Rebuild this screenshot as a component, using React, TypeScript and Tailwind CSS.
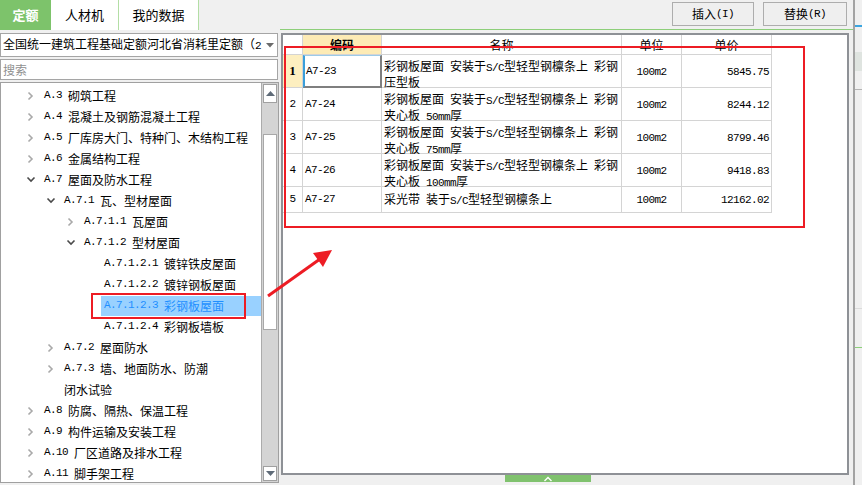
import React from 'react'

type Node = { lv: number; ch?: 'r' | 'd'; t: string; sel?: boolean }

const tree: Node[] = [
  { lv: 0, ch: 'r', t: 'A.3 砌筑工程' },
  { lv: 0, ch: 'r', t: 'A.4 混凝土及钢筋混凝土工程' },
  { lv: 0, ch: 'r', t: 'A.5 厂库房大门、特种门、木结构工程' },
  { lv: 0, ch: 'r', t: 'A.6 金属结构工程' },
  { lv: 0, ch: 'd', t: 'A.7 屋面及防水工程' },
  { lv: 1, ch: 'd', t: 'A.7.1 瓦、型材屋面' },
  { lv: 2, ch: 'r', t: 'A.7.1.1 瓦屋面' },
  { lv: 2, ch: 'd', t: 'A.7.1.2 型材屋面' },
  { lv: 3, t: 'A.7.1.2.1 镀锌铁皮屋面' },
  { lv: 3, t: 'A.7.1.2.2 镀锌钢板屋面' },
  { lv: 3, t: 'A.7.1.2.3 彩钢板屋面', sel: true },
  { lv: 3, t: 'A.7.1.2.4 彩钢板墙板' },
  { lv: 1, ch: 'r', t: 'A.7.2 屋面防水' },
  { lv: 1, ch: 'r', t: 'A.7.3 墙、地面防水、防潮' },
  { lv: 1, t: '闭水试验' },
  { lv: 0, ch: 'r', t: 'A.8 防腐、隔热、保温工程' },
  { lv: 0, ch: 'r', t: 'A.9 构件运输及安装工程' },
  { lv: 0, ch: 'r', t: 'A.10 厂区道路及排水工程' },
  { lv: 0, ch: 'r', t: 'A.11 脚手架工程' },
]

const rows = [
  { n: '1', code: 'A7-23', name: ['彩钢板屋面 安装于S/C型轻型钢檩条上 彩钢', '压型板'], unit: '100m2', price: '5845.75' },
  { n: '2', code: 'A7-24', name: ['彩钢板屋面 安装于S/C型轻型钢檩条上 彩钢', '夹心板 50mm厚'], unit: '100m2', price: '8244.12' },
  { n: '3', code: 'A7-25', name: ['彩钢板屋面 安装于S/C型轻型钢檩条上 彩钢', '夹心板 75mm厚'], unit: '100m2', price: '8799.46' },
  { n: '4', code: 'A7-26', name: ['彩钢板屋面 安装于S/C型轻型钢檩条上 彩钢', '夹心板 100mm厚'], unit: '100m2', price: '9418.83' },
  { n: '5', code: 'A7-27', name: ['采光带 装于S/C型轻型钢檩条上'], unit: '100m2', price: '12162.02' },
]

// ascii runs get the narrow mono font, like the SimSun half-width glyphs
function Txt({ s }: { s: string }) {
  const parts = s.split(/([ -~]+)/)
  return (
    <>
      {parts.map((p, i) =>
        !p ? null : /^[ -~]+$/.test(p) ? (
          <span key={i} className="font-['Liberation_Mono',monospace] text-[11px] tracking-[-0.6px] whitespace-pre">
            {p}
          </span>
        ) : (
          <span key={i}>{p}</span>
        )
      )}
    </>
  )
}

function Chevron({ kind }: { kind?: 'r' | 'd' }) {
  if (kind === 'r')
    return (
      <svg width="7" height="10" viewBox="0 0 7 10">
        <path d="M1.5 1.5 L5 5 L1.5 8.5" stroke="#a9a9a9" strokeWidth="1.6" fill="none" />
      </svg>
    )
  if (kind === 'd')
    return (
      <svg width="10" height="7" viewBox="0 0 10 7">
        <path d="M1.5 1.5 L5 5 L8.5 1.5" stroke="#4a4a4a" strokeWidth="1.6" fill="none" />
      </svg>
    )
  return null
}

export default function App() {
  return (
    <div className="relative w-[862px] h-[485px] overflow-hidden bg-[#f0f0f0] flex font-['Noto_Sans_CJK_SC',sans-serif] text-[12px] text-black">
      {/* left column */}
      <div className="w-[280px] flex flex-col">
        <div className="h-[30px] flex text-[13px]">
          <div className="w-[51px] bg-[#7dc36b] text-white font-bold flex items-center justify-center">定额</div>
          <div className="w-[68px] bg-white border-r border-[#b3dea5] flex items-center justify-center">人材机</div>
          <div className="w-[80px] bg-white border-r border-[#b3dea5] flex items-center justify-center">我的数据</div>
        </div>

        <div className="mt-[3px] w-[278px] h-[24px] bg-white border border-[#a5a5a5] flex items-center pl-[2px] pr-[3px]">
          <div className="flex-1 whitespace-nowrap overflow-hidden">
            <Txt s="全国统一建筑工程基础定额河北省消耗里定额（2" />
          </div>
          <svg width="8" height="5" viewBox="0 0 8 5" className="ml-[2px]">
            <path d="M0 0 L8 0 L4 4.5 Z" fill="#6b6b6b" />
          </svg>
        </div>

        <div className="mt-[2px] w-[278px] h-[21px] bg-white border border-[#a5a5a5] flex items-center pl-[2px] text-[#8f8f8f]">
          搜索
        </div>

        <div className="mt-[2px] w-[279px] h-[401px] bg-white border border-[#a0a0a0] flex overflow-hidden">
          <div className="flex-1 pt-[2px]">
            {tree.map((n, i) => (
              <div
                key={i}
                className="h-[21px] flex items-center whitespace-nowrap"
                style={{ paddingLeft: 23 + n.lv * 20 }}
              >
                <div className="w-[13px] flex items-center justify-center">
                  <Chevron kind={n.ch} />
                </div>
                <div
                  className={
                    n.sel
                      ? 'ml-[4px] pl-[3px] flex-1 h-[20px] flex items-center bg-[#99d1ff] text-[#1f8fff]'
                      : 'ml-[4px] pl-[3px] flex-1 h-[20px] flex items-center'
                  }
                >
                  <Txt s={n.t} />
                </div>
              </div>
            ))}
          </div>
          {/* scrollbar */}
          <div className="w-[17px] bg-[#d4d4d4] border-l border-[#ababab] flex flex-col p-px">
            <div className="h-[19px] bg-white border border-[#a0a0a0] flex items-center justify-center">
              <svg width="9" height="5" viewBox="0 0 9 5">
                <path d="M0 5 L9 5 L4.5 0 Z" fill="#5f6b78" />
              </svg>
            </div>
            <div className="h-[31px]" />
            <div className="h-[196px] bg-white border border-[#a8a8a8]" />
            <div className="flex-1" />
            <div className="h-[15px] bg-white border border-[#a0a0a0] flex items-center justify-center">
              <svg width="9" height="5" viewBox="0 0 9 5">
                <path d="M0 0 L9 0 L4.5 5 Z" fill="#5f6b78" />
              </svg>
            </div>
          </div>
        </div>
      </div>

      {/* right column */}
      <div className="w-[573px] flex flex-col">
        <div className="h-[29px] flex justify-end items-start pt-[2px] pr-[6px] gap-[9px]">
          <div className="w-[82px] h-[24px] bg-[#efefef] border border-[#adadad] flex items-center justify-center">
            <Txt s="插入(I)" />
          </div>
          <div className="w-[84px] h-[24px] bg-[#efefef] border border-[#adadad] flex items-center justify-center">
            <Txt s="替换(R)" />
          </div>
        </div>
        <div className="h-px bg-[#8dcf7a]" />

        <div className="mt-[3px] ml-px w-[568px] h-[442px] bg-white border-2 border-[#8e9196]">
          {/* header */}
          <div className="flex h-[20px]">
            <div className="w-[20px] border-r border-b border-[#d4d4d4]" />
            <div className="w-[79px] bg-[#fdebb5] border-r border-b border-[#d4d4d4] flex items-center justify-center font-bold">
              编码
            </div>
            <div className="w-[240px] border-r border-b border-[#d4d4d4] flex items-center justify-center">名称</div>
            <div className="w-[60px] border-r border-b border-[#d4d4d4] flex items-center justify-center">单位</div>
            <div className="w-[90px] border-r border-b border-[#d4d4d4] flex items-center justify-center">单价</div>
          </div>
          {rows.map((r, i) => (
            <div key={r.n} className={i === 4 ? 'flex h-[26px]' : 'flex h-[33px]'}>
              <div
                className={
                  i === 0
                    ? 'w-[20px] bg-[#fdefc0] border-r border-b border-[#d4d4d4] flex items-center justify-center font-bold font-["Liberation_Serif",serif] text-[13px]'
                    : 'w-[20px] border-r border-b border-[#d4d4d4] flex items-center justify-center'
                }
              >
                {i === 0 ? r.n : <Txt s={r.n} />}
              </div>
              <div
                className={
                  i === 0
                    ? 'w-[79px] border-l-2 border-t border-r-2 border-b-2 border-l-[#3a9fda] border-t-[#9ccbe8] border-r-[#7f7f7f] border-b-[#7f7f7f] flex items-center pl-[1px]'
                    : 'w-[79px] border-r border-b border-[#d4d4d4] flex items-center pl-[2px]'
                }
              >
                <Txt s={r.code} />
              </div>
              <div
                className={
                  r.name.length > 1
                    ? 'w-[240px] border-r border-b border-[#d4d4d4] pl-[2px] pt-[4px] leading-[14px] whitespace-nowrap'
                    : 'w-[240px] border-r border-b border-[#d4d4d4] pl-[2px] flex items-center whitespace-nowrap'
                }
              >
                {r.name.map((l, j) => (
                  <div key={j}>
                    <Txt s={l} />
                  </div>
                ))}
              </div>
              <div className="w-[60px] border-r border-b border-[#d4d4d4] flex items-center justify-center pt-[2px]">
                <Txt s={r.unit} />
              </div>
              <div className="w-[90px] border-r border-b border-[#d4d4d4] flex items-center justify-end pr-[2px] pt-[2px]">
                <Txt s={r.price} />
              </div>
            </div>
          ))}
        </div>

        <div className="ml-[225px] w-[86px] h-[7px] bg-[#80c26e] flex justify-center">
          <svg width="10" height="7" viewBox="0 0 10 7">
            <path d="M1.5 6 L5 2.5 L8.5 6" stroke="#ffffff" strokeWidth="1.4" fill="none" />
          </svg>
        </div>
      </div>

      {/* far right strip */}
      <div className="flex-1 border-l-2 border-[#a3a3a3] flex flex-col">
        <div className="mt-[25px] h-[2px] bg-[#3ba5e0]" />
        <div className="mt-[25px] h-[19px] bg-[#dfe4e0]" />
        <div className="mt-[18px] h-px bg-[#b4b4b4]" />
        <div className="mt-[218px] h-px bg-[#dcdcdc]" />
        <div className="mt-[38px] h-px bg-[#8dcf7a]" />
      </div>

      {/* red annotations */}
      <div className="absolute left-[284px] top-[46px] w-[521px] h-[182px] border-2 border-[#ed1c24] pointer-events-none" />
      <div className="absolute left-[91px] top-[293px] w-[155px] h-[26px] border-2 border-[#ed1c24] pointer-events-none" />
      <svg className="absolute left-0 top-0 pointer-events-none" width="862" height="485">
        <line x1="268" y1="296" x2="320" y2="259" stroke="#ed1c24" strokeWidth="3" />
        <polygon points="332,250 313,253 323,267" fill="#ed1c24" />
      </svg>
    </div>
  )
}
